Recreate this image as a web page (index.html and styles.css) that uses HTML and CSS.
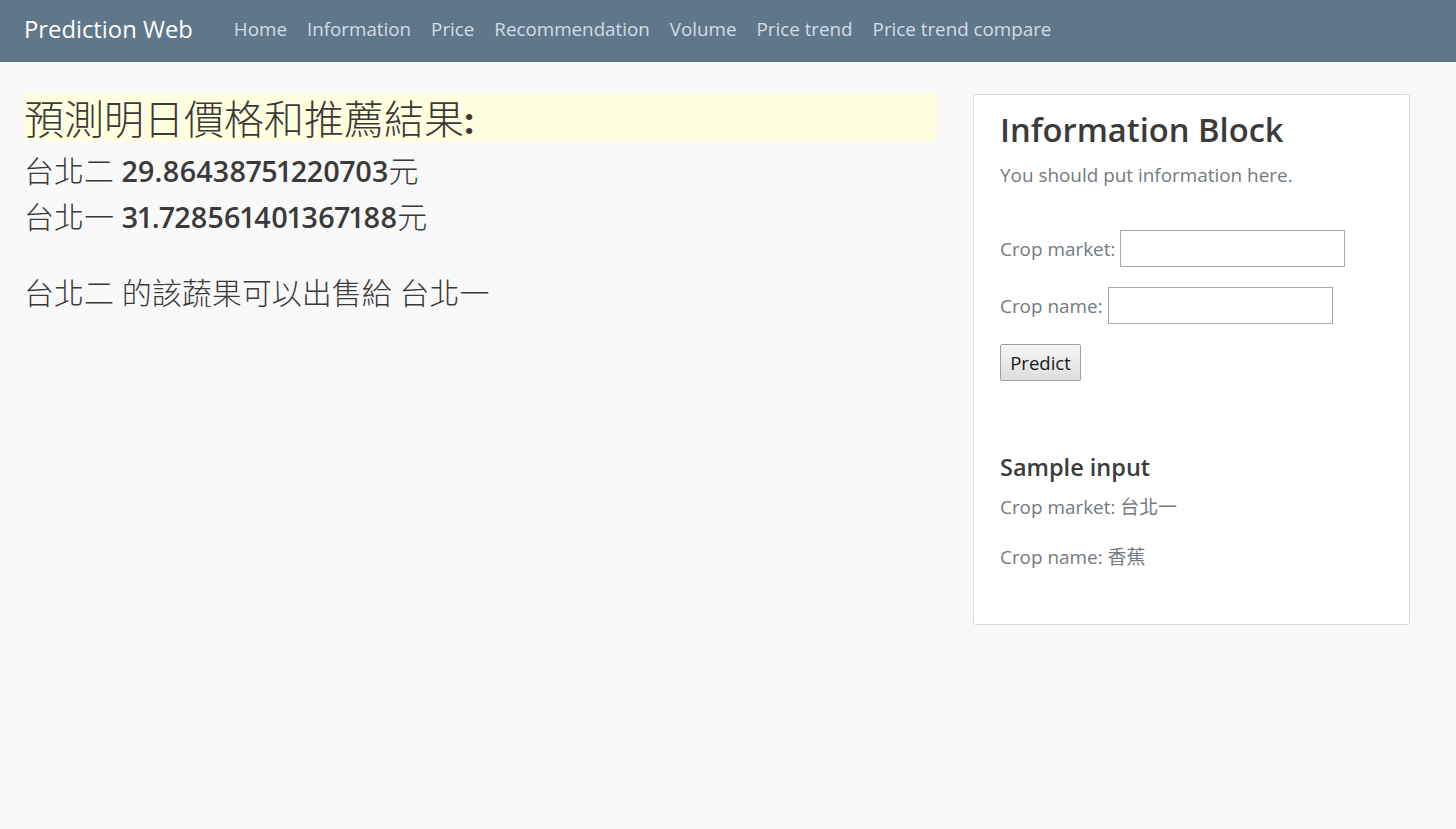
FILE: index.html
```html
<!DOCTYPE html>
<html lang="zh-Hant">
<head>
<meta charset="utf-8">
<title>Prediction Web</title>
<link rel="stylesheet" href="styles.css">
</head>
<body>
<nav class="navbar">
  <a class="brand" href="#">Prediction Web</a>
  <ul class="nav-links">
    <li><a href="#">Home</a></li>
    <li><a href="#">Information</a></li>
    <li><a href="#">Price</a></li>
    <li><a href="#">Recommendation</a></li>
    <li><a href="#">Volume</a></li>
    <li><a href="#">Price trend</a></li>
    <li><a href="#">Price trend compare</a></li>
  </ul>
</nav>
<main class="layout">
  <section class="results">
    <h1 class="result-title">預測明日價格和推薦結果<span class="colon">:</span></h1>
    <p class="price-line">台北二 <b>29.86438751220703</b>元</p>
    <p class="price-line">台北一 <b>31.728561401367188</b>元</p>
    <p class="recommend">台北二 的該蔬果可以出售給 台北一</p>
  </section>
  <aside class="card">
    <h2 class="card-title">Information Block</h2>
    <p class="card-text">You should put information here.</p>
    <form class="crop-form">
      <div class="field"><label>Crop market:</label><input type="text" class="input"></div>
      <div class="field"><label>Crop name:</label><input type="text" class="input"></div>
      <button type="button" class="btn">Predict</button>
    </form>
    <h3 class="sample-title">Sample input</h3>
    <p class="sample">Crop market: 台北一</p>
    <p class="sample">Crop name: 香蕉</p>
  </aside>
</main>
</body>
</html>
```
FILE: styles.css
```css
* { box-sizing: border-box; }
html, body { margin: 0; padding: 0; }
body {
  background: #f9f9f9;
  font-family: "Open Sans", "Noto Sans CJK TC", sans-serif;
  color: #373a3c;
  width: 1456px;
  height: 829px;
  overflow: hidden;
}
.navbar {
  height: 62px;
  background: #5f7789;
  display: flex;
  align-items: center;
  padding: 0 0 4px 24px;
}
.brand {
  color: #ffffff;
  text-decoration: none;
  font-size: 23.8px;
  margin-right: 31px;
}
.nav-links {
  list-style: none;
  display: flex;
  margin: 0;
  padding: 0;
}
.nav-links a {
  display: block;
  color: #d2dde6;
  text-decoration: none;
  font-size: 18.8px;
  padding: 0 10px;
}
.layout {
  display: flex;
  align-items: flex-start;
  padding: 32px 46px 0 24px;
  gap: 38px;
}
.results { width: 911px; flex: none; }
.result-title {
  margin: 0;
  height: 47px;
  background: #ffffe0;
  font-family: "Noto Sans CJK TC", sans-serif;
  font-weight: 300;
  font-size: 40px;
  line-height: 47px;
  color: #3a3a3a;
}
.colon {
  font-family: "Open Sans", sans-serif;
  font-weight: 700;
  font-size: 36px;
  line-height: 0;
}
.price-line {
  margin: 7px 0 0;
  font-size: 30px;
  line-height: 46px;
  font-weight: 300;
  color: #3a3a3a;
}
.price-line + .price-line { margin-top: 0; }
.price-line b {
  font-weight: 600;
  font-size: 28.7px;
  line-height: 0;
  font-variant-numeric: proportional-nums;
}
.recommend {
  margin: 33px 0 0;
  font-size: 30px;
  line-height: 40px;
  font-weight: 300;
  color: #3a3a3a;
}
.card {
  flex: 1;
  background: #ffffff;
  border: 1px solid #dcdcdc;
  border-radius: 3px;
  padding: 13px 26px 32px;
  height: 531px;
}
.card-title {
  margin: 0;
  font-size: 32.7px;
  font-weight: 600;
  line-height: 44px;
  color: #3b3b3b;
}
.card-text {
  margin: 10px 0 0;
  font-size: 18.9px;
  color: #737b80;
  line-height: 26px;
}
.crop-form { margin-top: 42px; }
.field {
  display: flex;
  align-items: center;
  gap: 5px;
  margin-bottom: 20px;
}
.field label {
  font-size: 18.9px;
  color: #737b80;
}
.input {
  width: 225px;
  height: 37px;
  border: 1px solid #a9a9a9;
  background: #fff;
  margin: 0;
}
.btn {
  display: block;
  width: 81px;
  height: 37px;
  font-family: "Open Sans", sans-serif;
  font-size: 18.5px;
  color: #1a1a1a;
  background: linear-gradient(#f6f6f6, #dddddd);
  border: 1px solid #a0a0a0;
  border-radius: 2px;
  padding: 0;
}
.sample-title {
  margin: 70px 0 0;
  font-size: 23.5px;
  font-weight: 600;
  color: #3b3b3b;
  line-height: 32px;
}
.sample {
  margin: 11px 0 0;
  font-size: 18.9px;
  color: #737b80;
  line-height: 26px;
}
.sample + .sample { margin-top: 24px; }
```
